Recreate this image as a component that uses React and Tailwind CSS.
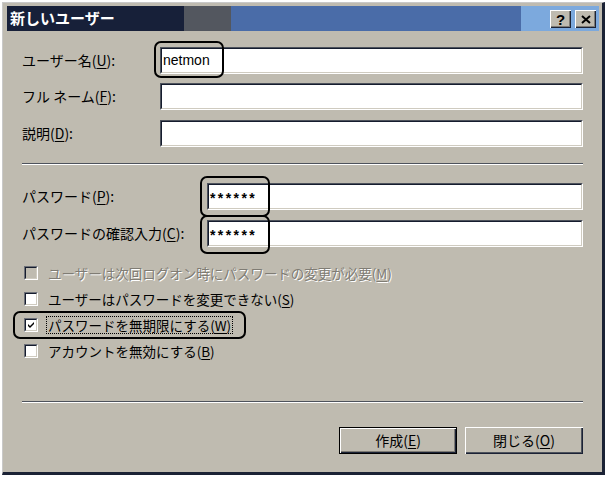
import React from 'react';

const jp = "font-['Noto_Sans_CJK_JP','Noto_Sans_CJK_SC',sans-serif]";

const Key = ({ text, k, colon = true }) => (
  <span className="whitespace-nowrap">
    {text}(<span className="underline underline-offset-2">{k}</span>){colon ? ':' : ''}
  </span>
);

const Field = ({ value, stars }) => (
  <div className="flex-1 h-[27px] border border-[#4d525c] border-b-white border-r-white">
    <div className="h-full border border-[#151c2e] border-b-[#cfcbc0] border-r-[#cfcbc0] bg-white flex items-center pl-[1px]">
      {stars ? (
        <span className="font-['Liberation_Sans',sans-serif] font-bold text-[14px] tracking-[2.4px] text-black pt-[3px]">{value}</span>
      ) : (
        <span className="font-['Liberation_Sans',sans-serif] text-[14px] text-black">{value}</span>
      )}
    </div>
  </div>
);

const Row = ({ label, labelW, value, stars, className = '' }) => (
  <div className={`flex items-center ${className}`}>
    <div className="text-[14px] text-black shrink-0" style={{ width: labelW }}>{label}</div>
    <Field value={value} stars={stars} />
  </div>
);

const Separator = ({ className = '' }) => (
  <div className={`h-[2px] border-t border-[#4d525c] border-b border-b-white ${className}`} />
);

const Check = ({ checked, disabled, children, focus, className = '' }) => (
  <div className={`flex items-center h-[20px] pl-[2px] ${className}`}>
    <div className="w-[14px] h-[14px] border border-[#6d7078] border-b-white border-r-white shrink-0">
      <div className={`w-full h-full border border-[#151c2e] border-b-[#cfcbc0] border-r-[#cfcbc0] flex items-center justify-center ${disabled ? 'bg-[#bfbbb0]' : 'bg-white'}`}>
        {checked && (
          <svg width="8" height="8" viewBox="0 0 8 8">
            <path d="M1 3 L3 5 L7 1 L7 3 L3 7 L1 5 Z" fill="#000" />
          </svg>
        )}
      </div>
    </div>
    <div
      className={`ml-[8px] text-[13.5px] leading-[16px] px-[1px] ${focus ? 'border border-dotted border-black' : 'border border-transparent'} ${disabled ? 'text-[#7f7c74] [text-shadow:1px_1px_0_#ffffff]' : 'text-black'}`}
    >
      {children}
    </div>
  </div>
);

const TitleButton = ({ children }) => (
  <div className="w-[21px] h-[18px] bg-[#bfbbb0] flex items-center justify-center shadow-[inset_1px_1px_0_#ffffff,inset_-1px_-1px_0_#1b2235,inset_-2px_-2px_0_#7d7a74]">
    {children}
  </div>
);

const Button = ({ children, isDefault }) => (
  <div
    className={`w-[118px] h-[27px] bg-[#bfbbb0] flex items-center justify-center text-[14px] text-black ${
      isDefault
        ? 'border border-black shadow-[inset_1px_1px_0_#ffffff,inset_-1px_-1px_0_#1b2235,inset_-2px_-2px_0_#7d7a74]'
        : 'shadow-[inset_1px_1px_0_#ffffff,inset_-1px_-1px_0_#1b2235,inset_-2px_-2px_0_#4d525c]'
    }`}
  >
    {children}
  </div>
);

export default function App() {
  return (
    <div className={`relative w-[605px] h-[478px] bg-white pt-[2px] pl-[2px] ${jp}`}>
      <div className="w-[603px] h-[473px] bg-[#bfbbb0] border-t border-l border-[#c9c9c9] border-r-[3px] border-b-[3px] border-r-[#1b2235] border-b-[#1b2235] pt-[3px] pl-[4px] pr-[3px]">
        {/* title bar */}
        <div className="relative h-[25px] flex">
          <div className="w-[177px] bg-[#172039]" />
          <div className="w-[47px] bg-[#53575f]" />
          <div className="w-[290px] bg-[#4a6ca8]" />
          <div className="flex-1 bg-[#7ca9dd]" />
          <div className="absolute left-[3px] top-0 h-full flex items-center text-white font-bold text-[15px]">
            新しいユーザー
          </div>
          <div className="absolute right-[3px] top-[4px] flex gap-[4px]">
            <TitleButton>
              <span className="font-['Liberation_Sans',sans-serif] font-bold text-[15px] leading-none text-black">?</span>
            </TitleButton>
            <TitleButton>
              <svg width="10" height="9" viewBox="0 0 10 9">
                <path d="M1 1 L9 8 M9 1 L1 8" stroke="#000" strokeWidth="2" />
              </svg>
            </TitleButton>
          </div>
        </div>

        {/* body */}
        <div className="pl-[15px] pr-[16px]">
          <Row className="mt-[16px]" labelW={138} label={<Key text="ユーザー名" k="U" />} value="netmon" />
          <Row className="mt-[9px]" labelW={138} label={<Key text="フル ネーム" k="F" />} value="" />
          <Row className="mt-[10px]" labelW={138} label={<Key text="説明" k="D" />} value="" />

          <Separator className="mt-[16px]" />

          <Row className="mt-[18px]" labelW={185} label={<Key text="パスワード" k="P" />} value="******" stars />
          <Row className="mt-[10px]" labelW={185} label={<Key text="パスワードの確認入力" k="C" />} value="******" stars />

          <div className="mt-[16px] flex flex-col gap-[6px]">
            <Check disabled>
              <Key text="ユーザーは次回ログオン時にパスワードの変更が必要" k="M" colon={false} />
            </Check>
            <Check>
              <Key text="ユーザーはパスワードを変更できない" k="S" colon={false} />
            </Check>
            <Check checked focus>
              <Key text="パスワードを無期限にする" k="W" colon={false} />
            </Check>
            <Check>
              <Key text="アカウントを無効にする" k="B" colon={false} />
            </Check>
          </div>

          <Separator className="mt-[40px]" />

          <div className="mt-[24px] flex justify-end gap-[8px]">
            <Button isDefault>
              <Key text="作成" k="E" colon={false} />
            </Button>
            <Button>
              <Key text="閉じる" k="O" colon={false} />
            </Button>
          </div>
        </div>
      </div>

      {/* annotation marks drawn over the dialog */}
      <div className="absolute left-[154px] top-[41px] w-[70px] h-[37px] border-2 border-black rounded-[7px]" />
      <div className="absolute left-[200px] top-[176px] w-[70px] h-[41px] border-2 border-black rounded-[7px]" />
      <div className="absolute left-[200px] top-[215px] w-[70px] h-[39px] border-2 border-black rounded-[7px]" />
      <div className="absolute left-[13px] top-[311px] w-[233px] h-[28px] border-2 border-black rounded-[7px]" />
    </div>
  );
}
